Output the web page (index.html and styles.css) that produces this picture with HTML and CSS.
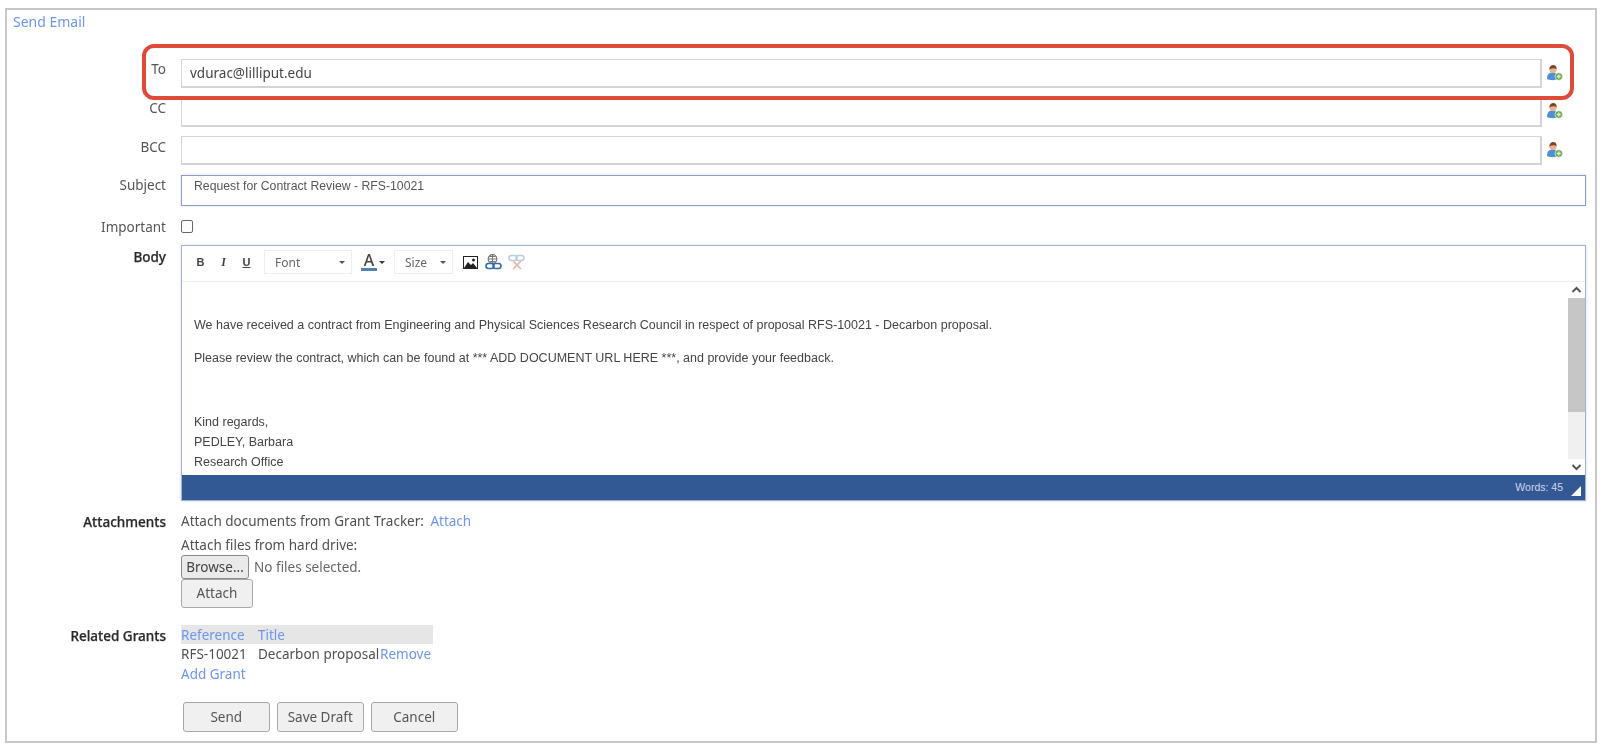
FILE: index.html
```html
<!DOCTYPE html>
<html lang="en">
<head>
<meta charset="utf-8">
<title>Send Email</title>
<link rel="stylesheet" href="styles.css">
</head>
<body>
<main class="frame">
  <h1 class="title">Send Email</h1>
  <form class="form">
    <div class="recipients">
      <div class="row"><label class="label">To</label><div class="recipient"><input class="field" type="text" value="vdurac@lilliput.edu"><svg class="person" viewBox="0 0 16 16"><use href="#person"/></svg></div></div>
      <div class="row"><label class="label">CC</label><div class="recipient"><input class="field" type="text"><svg class="person" viewBox="0 0 16 16"><use href="#person"/></svg></div></div>
      <div class="row"><label class="label label-to">BCC</label><div class="recipient"><input class="field" type="text"><svg class="person" viewBox="0 0 16 16"><use href="#person"/></svg></div></div>
      <div class="row"><label class="label">Subject</label><div class="subject">Request for Contract Review - RFS-10021</div></div>
    </div>
    <div class="row row-important"><label class="label">Important</label><span class="checkbox"></span></div>
    <div class="row row-body">
      <label class="label label-strong label-bodytext">Body</label>
      <div class="editor">
        <div class="toolbar">
          <b class="tool tool-b">B</b><i class="tool tool-i">I</i><u class="tool tool-u">U</u>
          <span class="combo combo-font">Font<span class="caret"></span></span>
          <span class="color-tool"><span class="color-a">A</span><span class="caret caret-dark"></span></span>
          <span class="combo combo-size">Size<span class="caret"></span></span>
          <svg class="ticon ticon-image" viewBox="0 0 15 13"><rect x=".5" y=".5" width="14" height="12" fill="#fff" stroke="#222"/><path d="M1 12 5 6l3 3 2-2 4 5z" fill="#222"/><circle cx="10.500" cy="4" r="1.500" fill="#222"/></svg>
          <svg class="ticon ticon-link" viewBox="0 0 17 16"><circle cx="7.500" cy="5" r="4.300" fill="#fff" stroke="#777" stroke-width="1.200"/><path d="M3.200 5h8.600M7.500.8v8.400M4.500 2.500h6M4.500 7.500h6" stroke="#777"/><rect x="1" y="9.500" width="8" height="5" rx="2.500" fill="none" stroke="#2f6db0" stroke-width="1.600"/><rect x="8" y="9.500" width="8" height="5" rx="2.500" fill="none" stroke="#2f6db0" stroke-width="1.600"/></svg>
          <svg class="ticon ticon-unlink" viewBox="0 0 17 16"><rect x="1" y="1.500" width="8" height="5" rx="2.500" fill="none" stroke="#b9cfe0" stroke-width="1.600"/><rect x="8" y="1.500" width="8" height="5" rx="2.500" fill="none" stroke="#b9cfe0" stroke-width="1.600"/><path d="M5 7l8 8M13 7l-8 8" stroke="#eab5a8" stroke-width="1.600"/></svg>
        </div>
        <div class="editor-main">
          <div class="content">
            <p class="para">We have received a contract from Engineering and Physical Sciences Research Council in respect of proposal RFS-10021 - Decarbon proposal.</p>
            <p class="para para-gap">Please review the contract, which can be found at *** ADD DOCUMENT URL HERE ***, and provide your feedback.</p>
            <p class="line">Kind regards,</p>
            <p class="line">PEDLEY, Barbara</p>
            <p class="line">Research Office</p>
          </div>
          <div class="scrollbar">
            <svg class="arrow" viewBox="0 0 17 16"><path d="M4.500 10 8.500 6l4 4" fill="none" stroke="#555" stroke-width="2"/></svg>
            <div class="thumb"></div>
            <div class="track"></div>
            <svg class="arrow" viewBox="0 0 17 16"><path d="M4.500 6l4 4 4-4" fill="none" stroke="#555" stroke-width="2"/></svg>
          </div>
        </div>
        <div class="statusbar"><span class="words">Words: 45</span><span class="resize"></span></div>
      </div>
    </div>
    <div class="row row-attach">
      <label class="label label-strong label-attach">Attachments</label>
      <div class="attach">
        <div class="attach-line">Attach documents from Grant Tracker: <a class="link link-attach">Attach</a></div>
        <div class="attach-line attach-line-2">Attach files from hard drive:</div>
        <div class="file"><button class="browse" type="button">Browse...</button><span class="nofile">No files selected.</span></div>
        <button class="btn btn-attach" type="button">Attach</button>
      </div>
    </div>
    <div class="row row-grants">
      <label class="label label-strong label-grants">Related Grants</label>
      <table class="grants">
        <thead><tr><th class="col-ref">Reference</th><th class="col-title">Title</th><th class="col-action"></th></tr></thead>
        <tbody>
          <tr><td>RFS-10021</td><td>Decarbon proposal</td><td><a class="link">Remove</a></td></tr>
          <tr><td colspan="3"><a class="link">Add Grant</a></td></tr>
        </tbody>
      </table>
    </div>
    <div class="actions">
      <button class="btn btn-action" type="button">Send</button>
      <button class="btn btn-action" type="button">Save Draft</button>
      <button class="btn btn-action" type="button">Cancel</button>
    </div>
  </form>
  <div class="highlight"></div>
</main>
<svg class="defs" width="0" height="0">
  <defs>
    <g id="person">
      <path d="M0 14c0-4.500 2-6.500 5.500-6.500S11 9.500 11 14c-2 1.500-9 1.500-11 0z" fill="#4f8fd8"/>
      <circle cx="6" cy="4.500" r="3.600" fill="#e8b48c"/>
      <path d="M2.400 4.500C2.200 1.500 4.300 0 6.200 0s3.700 1.300 3.400 4.200C8 2.900 5 2.900 2.400 4.500z" fill="#7a4526"/>
      <circle cx="11.800" cy="11.500" r="3.800" fill="#6aa84f" stroke="#fff" stroke-width=".6"/>
      <path d="M9.800 11.500h4M11.800 9.500v4" stroke="#dff0d5" stroke-width="1.300"/>
    </g>
  </defs>
</svg>
</body>
</html>
```
FILE: styles.css
```css
* { box-sizing: border-box; }
html, body { margin: 0; padding: 0; background: #fff; }
body { font-family: "Noto Sans", "Liberation Sans", sans-serif; font-size: 13.5px; color: #505050; overflow: hidden; }
.defs { position: absolute; }
.frame { position: relative; width: 1592px; height: 735px; margin: 8px 0 0 5px; border: 2px solid #c8c8c8; filter: blur(.35px); }
.title { margin: 0; padding-left: 6px; font-size: 14px; font-weight: 400; line-height: 24px; color: #6b96f2; }
.form { padding-top: 25px; }
.recipients { display: grid; row-gap: 9.5px; }
.row { display: grid; grid-template-columns: 159px 1fr; column-gap: 15px; }
.label { display: block; text-align: right; line-height: 20px; color: #555; }
.label-to { padding-top: 1px; }
.label-strong { color: #2a2a2a; font-weight: 500; -webkit-text-stroke: .25px #2a2a2a; }
.recipient { display: flex; align-items: center; gap: 5px; height: 29px; }
.field { width: 1361px; height: 29px; padding: 0 8px; border: 2px solid #d4d4d4; border-width: 1px 2px 2px 1px; font: 13.5px "Noto Sans", sans-serif; color: #444; outline: none; }
.person { width: 16px; height: 16px; flex: none; margin-top: -2px; }
.subject { width: 1405px; height: 31px; padding: 2px 12px; border: 1px solid #8d9cc4; box-shadow: 0 0 2px #ccd3e6; font: 12.25px/16px "Liberation Sans", sans-serif; color: #555; }
.row-important { margin-top: 11px; align-items: center; height: 14px; }
.checkbox { display: block; width: 12px; height: 13px; border: 1.500px solid #666; border-radius: 2px; background: #fff; }
.row-body { margin-top: 14px; }
.label-bodytext { padding-top: 2px; }
.editor { width: 1405px; height: 256px; display: flex; flex-direction: column; border: 1px solid #a5b1d2; box-shadow: 0 0 3px #d4d9e8; }
.toolbar { display: flex; align-items: center; height: 36px; padding: 0 0 2px 7px; border-bottom: 1px solid #eee; flex: none; }
.tool { width: 23px; text-align: center; font: 11px "Liberation Sans", sans-serif; color: #444; }
.tool-b { font-weight: 700; }
.tool-i { font-style: italic; font-family: "Liberation Serif", serif; font-weight: 700; font-size: 12px; }
.tool-u { font-weight: 700; }
.combo { display: flex; align-items: center; height: 24px; border: 1px solid #eee; font-size: 12px; color: #666; padding-left: 10px; }
.combo-font { width: 88px; margin-left: 6px; }
.combo-size { width: 59px; margin-left: 9px; }
.caret { width: 0; height: 0; margin-left: auto; margin-right: 6px; border-left: 3px solid transparent; border-right: 3px solid transparent; border-top: 3px solid #555; }
.color-tool { display: flex; align-items: center; width: 24px; margin-left: 9px; }
.color-a { width: 16px; height: 18px; border-bottom: 3px solid #4f7fb5; font: 500 16px/15px "Noto Sans", sans-serif; color: #444; text-align: center; }
.caret-dark { margin: 0 0 0 2px; border-top-color: #333; }
.ticon { flex: none; }
.ticon-image { width: 15px; height: 13px; margin-left: 10px; }
.ticon-link { width: 17px; height: 16px; margin-left: 7px; }
.ticon-unlink { width: 17px; height: 16px; margin-left: 6px; }
.editor-main { display: flex; flex: 1; min-height: 0; }
.content { flex: 1; padding: 33px 12px 0; font: 12.5px/20px "Liberation Sans", sans-serif; color: #444; }
.content p { margin: 0; }
.para-gap { margin-top: 13px !important; margin-bottom: 44px !important; }
.scrollbar { display: flex; flex-direction: column; width: 17px; margin-left: 1px; background: #f0f0f0; }
.arrow { width: 17px; height: 16px; flex: none; background: #fff; }
.thumb { height: 114px; background: #c6c6c6; }
.track { flex: 1; }
.statusbar { position: relative; display: flex; align-items: center; justify-content: flex-end; height: 25px; flex: none; padding-right: 22px; background: #335995; }
.words { font: 10.500px "Liberation Sans", sans-serif; color: #cdd8ea; }
.resize { position: absolute; right: 4px; bottom: 4px; width: 0; height: 0; border-left: 10px solid transparent; border-bottom: 10px solid #fff; }
.row-attach { margin-top: 10px; }
.label-attach { padding-top: 1px; }
.attach { display: flex; flex-direction: column; align-items: flex-start; padding-top: 1px; }
.attach-line { line-height: 19px; color: #505050; }
.attach-line-2 { margin-top: 5px; }
.link { color: #6b96f2; text-decoration: none; }
.link-attach { margin-left: 3px; }
.file { display: flex; align-items: center; gap: 5px; height: 24px; }
.browse { width: 68px; height: 24px; padding: 0; border: 1px solid #8a8a8a; border-radius: 3px; background: #eaeaea; font: 13.5px "Noto Sans", sans-serif; color: #444; }
.nofile { color: #666; }
.btn { height: 29px; padding: 0; border: 1px solid #a8a8a8; border-radius: 3px; background: #f0f0f0; font: 13.5px "Noto Sans", sans-serif; color: #555; }
.btn-attach { width: 72px; }
.row-grants { margin-top: 17px; }
.label-grants { padding-top: 1px; }
.grants { width: 252px; border-collapse: collapse; font-size: 13.5px; line-height: 20px; table-layout: fixed; }
.grants th { padding: 1px 0 0; background: #e6e6e6; font-weight: 400; text-align: left; color: #6b96f2; line-height: 18px; }
.grants td { padding: 0; color: #505050; white-space: nowrap; }
.col-ref { width: 77px; }
.col-title { width: 122px; }
.actions { display: flex; gap: 7.5px; margin: 18px 0 0 176px; }
.btn-action { width: 86.5px; height: 30px; }
.highlight { position: absolute; left: 135px; top: 34px; width: 1432px; height: 56px; border: 4px solid #e04a38; border-radius: 12px; pointer-events: none; }
```
